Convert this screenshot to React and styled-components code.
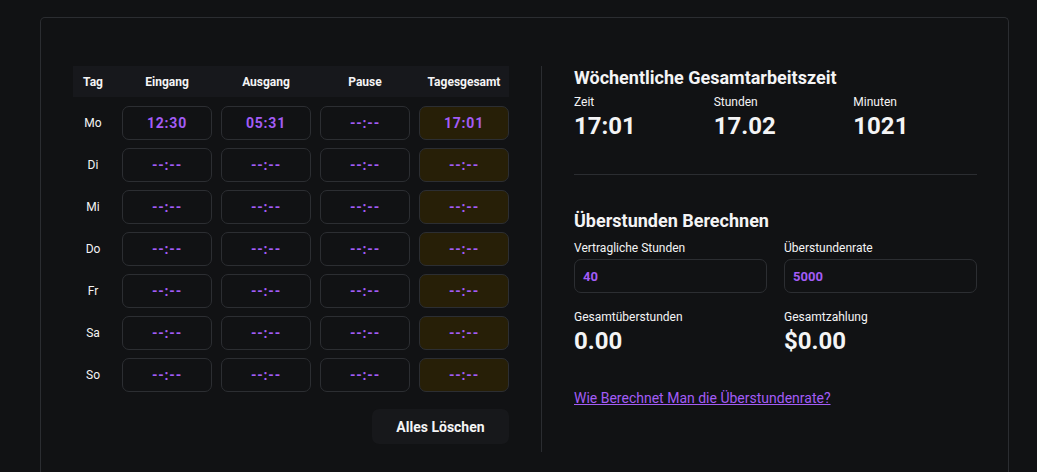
import React from 'react'
import styled, { createGlobalStyle } from 'styled-components'

const GlobalStyle = createGlobalStyle`
body {
  margin: 0;
  background: #111214;
  font-family: Roboto, "Liberation Sans", Arial, sans-serif;
  color: #f4f4f5;
}
`

const Page = styled.div`
padding: 17px 28px 0 40px;
height: 472px;
box-sizing: border-box;
overflow: hidden;
`

const Card = styled.div`
border: 1px solid #2b2d31;
border-bottom: none;
border-radius: 5px 5px 0 0;
padding: 48px 31px 20px 32px;
display: grid;
grid-template-columns: 436px 1px 403px;
column-gap: 32px;
min-height: 480px;
box-sizing: border-box;
`

const Left = styled.div`
display: flex;
flex-direction: column;
`

const Grid = styled.div`
display: grid;
grid-template-columns: 40px repeat(4, 1fr);
column-gap: 9px;
row-gap: 8px;
`

const HeaderRow = styled.div`
grid-column: 1 / -1;
display: grid;
grid-template-columns: 40px repeat(4, 1fr);
column-gap: 9px;
background: #17181c;
height: 31px;
align-items: center;
margin-bottom: 1px;
`

const HeadCell = styled.div`
text-align: center;
font-size: 12px;
font-weight: 700;
color: #f4f4f5;
`

const Day = styled.div`
display: flex;
align-items: center;
justify-content: center;
font-size: 12px;
font-weight: 400;
color: #f4f4f5;
`

const TimeCell = styled.div`
height: 34px;
box-sizing: border-box;
border: 1px solid #2c2e32;
border-radius: 7px;
background: ${props => props.total ? '#271f07' : '#111214'};
display: flex;
align-items: center;
justify-content: center;
font-size: 14px;
font-weight: 700;
letter-spacing: 0.8px;
color: #a35cf6;
`

const ClearButton = styled.button`
align-self: flex-end;
margin-top: 17px;
width: 137px;
height: 35px;
border: none;
border-radius: 7px;
background: #17181b;
color: #f4f4f5;
font-family: inherit;
font-size: 14px;
font-weight: 700;
`

const Divider = styled.div`
background: #2b2d31;
height: 386px;
`

const Right = styled.div`
display: flex;
flex-direction: column;
padding-top: 1px;
`

const Title = styled.h2`
margin: 0;
font-size: 18px;
line-height: 22px;
font-weight: 700;
`

const Stats = styled.div`
display: grid;
grid-template-columns: repeat(${props => props.cols}, 1fr);
column-gap: ${props => props.cols === 3 ? '16px' : '17px'};
margin-top: ${props => props.top}px;
`

const Stat = styled.div`
display: flex;
flex-direction: column;
`

const Label = styled.div`
font-size: 12px;
line-height: 16px;
color: #f4f4f5;
`

const Value = styled.div`
margin-top: 2px;
font-size: 24px;
line-height: 28px;
font-weight: 700;
`

const Hr = styled.div`
height: 1px;
background: #2b2d31;
margin: 34px 0 35px;
`

const Input = styled.div`
margin-top: 3px;
height: 34px;
box-sizing: border-box;
border: 1px solid #2c2e32;
border-radius: 7px;
padding: 0 8px;
display: flex;
align-items: center;
font-size: 13px;
font-weight: 700;
color: #a35cf6;
`

const Link = styled.a`
margin-top: 33px;
font-size: 14px;
line-height: 20px;
color: #a35cf6;
text-decoration: underline;
align-self: flex-start;
`

const days = [
  { d: 'Mo', v: ['12:30', '05:31', '--:--', '17:01'] },
  { d: 'Di' }, { d: 'Mi' }, { d: 'Do' }, { d: 'Fr' }, { d: 'Sa' }, { d: 'So' },
]

const empty = ['--:--', '--:--', '--:--', '--:--']

const App = () => {
  return (
    <Page>
      <GlobalStyle />
      <Card>
        <Left>
          <Grid>
            <HeaderRow>
              <HeadCell>Tag</HeadCell>
              <HeadCell>Eingang</HeadCell>
              <HeadCell>Ausgang</HeadCell>
              <HeadCell>Pause</HeadCell>
              <HeadCell>Tagesgesamt</HeadCell>
            </HeaderRow>
            {days.map(row => (
              <React.Fragment key={row.d}>
                <Day>{row.d}</Day>
                {(row.v || empty).map((t, i) => (
                  <TimeCell key={i} total={i === 3}>{t}</TimeCell>
                ))}
              </React.Fragment>
            ))}
          </Grid>
          <ClearButton>Alles Löschen</ClearButton>
        </Left>

        <Divider />

        <Right>
          <Title>Wöchentliche Gesamtarbeitszeit</Title>
          <Stats cols={3} top={5}>
            <Stat><Label>Zeit</Label><Value>17:01</Value></Stat>
            <Stat><Label>Stunden</Label><Value>17.02</Value></Stat>
            <Stat><Label>Minuten</Label><Value>1021</Value></Stat>
          </Stats>
          <Hr />
          <Title>Überstunden Berechnen</Title>
          <Stats cols={2} top={8}>
            <Stat><Label>Vertragliche Stunden</Label><Input>40</Input></Stat>
            <Stat><Label>Überstundenrate</Label><Input>5000</Input></Stat>
          </Stats>
          <Stats cols={2} top={16}>
            <Stat><Label>Gesamtüberstunden</Label><Value>0.00</Value></Stat>
            <Stat><Label>Gesamtzahlung</Label><Value>$0.00</Value></Stat>
          </Stats>
          <Link href="#">Wie Berechnet Man die Überstundenrate?</Link>
        </Right>
      </Card>
    </Page>
  )
}

export default App
